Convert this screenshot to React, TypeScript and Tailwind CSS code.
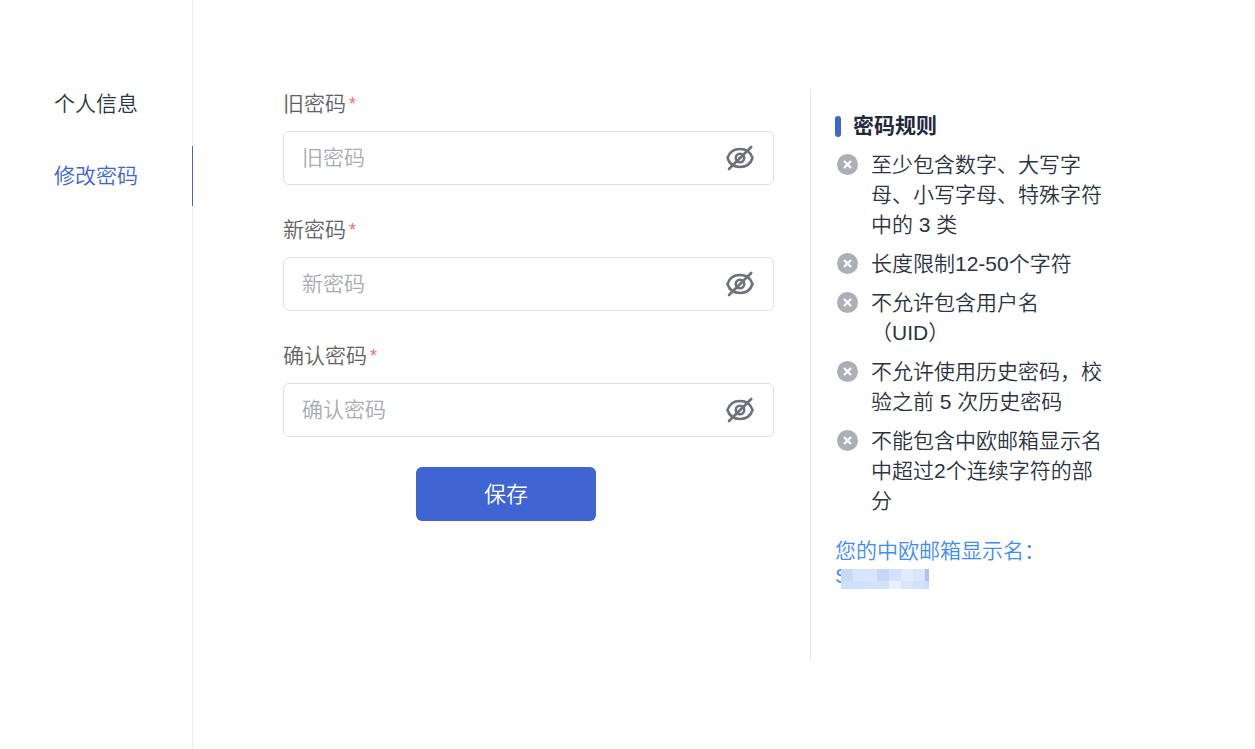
import { useState } from "react";

const navItems = [
    { label: '个人信息', href: '#profile', active: false },
    { label: '修改密码', href: '#password', active: true },
];

const fields = [
    { id: 'old-password', label: '旧密码' },
    { id: 'new-password', label: '新密码' },
    { id: 'confirm-password', label: '确认密码' },
];

const rules = [
    '至少包含数字、大写字母、小写字母、特殊字符中的 3 类',
    '长度限制12-50个字符',
    '不允许包含用户名\n（UID）',
    '不允许使用历史密码，校验之前 5 次历史密码',
    '不能包含中欧邮箱显示名中超过2个连续字符的部分',
];

// Tiles hiding the display name, top row then bottom row
const maskTiles = [
    'bg-[#c5d9fb]', 'bg-[#d7e5fd]', 'bg-[#d9e5fd]', 'bg-[#c5d8fb]', 'bg-[#d4e2fd]', 'bg-[#e2eafe]', 'bg-[#d9e6fe]', 'bg-[#a3c5fa]',
    'bg-[#cfe0fd]', 'bg-[#cfe0fc]', 'bg-[#d4e2fd]', 'bg-[#d4e3fd]', 'bg-[#e8f0ff]', 'bg-[#d9e5fd]', 'bg-[#d3e2fc]', 'bg-[#cbddfc]',
];

function EyeIcon({ hidden }: { hidden: boolean }) {
    return (
        <svg width="28" height="26" viewBox="0 0 28 26" fill="none" stroke="#6b727b" strokeWidth="2.6" strokeLinecap="round">
            <path d="M1.5 13C3.4 7 8.2 4 14 4S24.6 7 26.5 13C24.6 19 19.8 22 14 22S3.4 19 1.5 13Z" />
            <circle cx="14" cy="13" r="4.2" />
            {hidden && <path d="M3 24L25.2 2" />}
        </svg>
    );
}

function CrossIcon() {
    return (
        <svg className="mt-1 shrink-0" width="21" height="21" viewBox="0 0 21 21" aria-hidden="true">
            <circle cx="10.5" cy="10.5" r="10.5" fill="#acb0b6" />
            <path d="M7 7L14 14M14 7L7 14" stroke="#fff" strokeWidth="2.3" />
        </svg>
    );
}

function PasswordField({ id, label }: { id: string; label: string }) {
    const [hidden, setHidden] = useState(true);

    return (
        <div className="flex flex-col gap-3">
            <label htmlFor={id} className="flex gap-[3px] leading-[30px] text-[#606266]">
                {label}
                <span className="text-lg leading-[30px] text-[#f56c6c]">*</span>
            </label>
            <div className="flex h-[54px] items-center rounded-md border border-[#dcdfe6] bg-white pr-[19px] pl-[18px]">
                <input
                    id={id}
                    type={hidden ? 'password' : 'text'}
                    placeholder={label}
                    required
                    className="h-full min-w-0 flex-1 bg-transparent outline-none placeholder:text-[#a8abb2]"
                />
                <button
                    type="button"
                    className="cursor-pointer"
                    onClick={() => setHidden((prev) => !prev)}
                    aria-label={hidden ? '显示密码' : '隐藏密码'}
                >
                    <EyeIcon hidden={hidden} />
                </button>
            </div>
        </div>
    );
}

export default function App() {
    return (
        <div className="flex min-h-screen bg-white font-['Liberation_Sans','Noto_Sans_CJK_SC',sans-serif] text-[21px] font-[350] text-[#2b3440]">
            <nav className="w-[193px] shrink-0 border-r border-[#ededf0] pt-[74px]">
                <ul className="flex flex-col gap-3">
                    {navItems.map((item) => (
                        <li key={item.label}>
                            <a
                                href={item.href}
                                data-active={item.active}
                                className="-mr-px flex h-[60px] items-center border-r border-transparent pl-[54px] data-[active=true]:border-[#3f65d2] data-[active=true]:text-[#3f65d2]"
                            >
                                {item.label}
                            </a>
                        </li>
                    ))}
                </ul>
            </nav>

            <main className="flex flex-1 items-start gap-9 border-r-2 border-[#fafafa] pt-[89px] pr-[145px] pl-[90px]">
                <form className="flex min-w-0 flex-1 flex-col gap-[30px]" onSubmit={(e) => e.preventDefault()}>
                    {fields.map((field) => (
                        <PasswordField key={field.id} id={field.id} label={field.label} />
                    ))}
                    <div className="flex justify-center pr-[45px]">
                        <button type="submit" className="h-[54px] w-[180px] cursor-pointer rounded-md bg-[#3f65d2] text-[22px] text-white">
                            保存
                        </button>
                    </div>
                </form>

                <aside className="min-h-[571px] w-[298px] shrink-0 border-l border-[#e4e7ed] pt-[22px] pl-6">
                    <h2 className="flex items-center gap-3 leading-[30px] font-bold text-[#1f2a3c]">
                        <span className="h-[21px] w-1.5 rounded-full bg-[#3f65d2]" />
                        密码规则
                    </h2>
                    <ul className="mt-[9px] flex flex-col gap-[9px] pl-0.5 leading-[30px]">
                        {rules.map((rule) => (
                            <li key={rule} className="flex gap-[13px]">
                                <CrossIcon />
                                <span className="whitespace-pre-line">{rule}</span>
                            </li>
                        ))}
                    </ul>
                    <div className="mt-[22px] leading-[26px] text-[#3f8cf7]">
                        <p>您的中欧邮箱显示名：</p>
                        <p className="relative leading-6">
                            S
                            <span className="absolute top-[5px] left-1.5 grid w-[88px] grid-cols-[repeat(7,12px)_4px] grid-rows-[12px_8px]">
                                {maskTiles.map((tile, index) => (
                                    <span key={index} className={tile} />
                                ))}
                            </span>
                        </p>
                    </div>
                </aside>
            </main>
        </div>
    );
}
